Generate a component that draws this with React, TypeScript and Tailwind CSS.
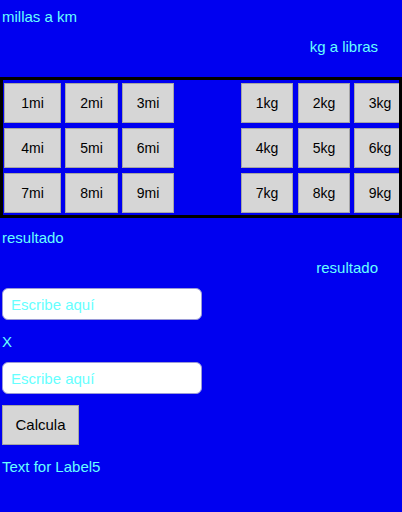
import React from "react";

const Btn = ({ label, w }: { label: string; w: string }) => (
  <button
    className={`${w} h-[40px] shrink-0 bg-[#d6d6d6] border border-[#a6a6a6] text-[14px] text-black`}
  >
    {label}
  </button>
);

const miRows = [
  ["1mi", "2mi", "3mi"],
  ["4mi", "5mi", "6mi"],
  ["7mi", "8mi", "9mi"],
];
const kgRows = [
  ["1kg", "2kg", "3kg"],
  ["4kg", "5kg", "6kg"],
  ["7kg", "8kg", "9kg"],
];

const App = () => {
  return (
    <div
      className="w-[402px] h-[512px] overflow-hidden bg-[#0000f0] text-[#66ffff] text-[15px] leading-[18px]"
      style={{ fontFamily: '"Liberation Sans", Arial, sans-serif' }}
    >
      <div className="mt-[8px] pl-[2px]">millas a km</div>
      <div className="mt-[12px] pr-[24px] text-right">kg a libras</div>

      <div className="mt-[21px] w-[402px] border-[3px] border-black pt-[3px] pb-[2px] pl-[1px] flex flex-col gap-[5px] overflow-hidden">
        {miRows.map((row, i) => (
          <div key={i} className="flex">
            <div className="flex gap-[4px]">
              <Btn label={row[0]} w="w-[57px]" />
              <Btn label={row[1]} w="w-[53px]" />
              <Btn label={row[2]} w="w-[52px]" />
            </div>
            <div className="flex ml-[67px]">
              <Btn label={kgRows[i][0]} w="w-[52px]" />
              <div className="ml-[5px]">
                <Btn label={kgRows[i][1]} w="w-[52px]" />
              </div>
              <div className="ml-[4px]">
                <Btn label={kgRows[i][2]} w="w-[52px]" />
              </div>
            </div>
          </div>
        ))}
      </div>

      <div className="mt-[11px] pl-[2px]">resultado</div>
      <div className="mt-[12px] pr-[24px] text-right">resultado</div>

      <input
        placeholder="Escribe aquí"
        className="block mt-[11px] ml-[2px] w-[200px] h-[32px] rounded-[6px] bg-white border border-[#9a9ad6] px-[8px] text-[15px] text-black placeholder:text-[#66ffff] outline-none"
      />
      <div className="mt-[13px] pl-[2px]">X</div>
      <input
        placeholder="Escribe aquí"
        className="block mt-[11px] ml-[2px] w-[200px] h-[32px] rounded-[6px] bg-white border border-[#9a9ad6] px-[8px] text-[15px] text-black placeholder:text-[#66ffff] outline-none"
      />
      <button className="block mt-[11px] ml-[2px] w-[77px] h-[40px] bg-[#d6d6d6] border border-[#a6a6a6] text-[15px] text-black">
        Calcula
      </button>
      <div className="mt-[13px] pl-[2px]">Text for Label5</div>
    </div>
  );
};

export default App;
